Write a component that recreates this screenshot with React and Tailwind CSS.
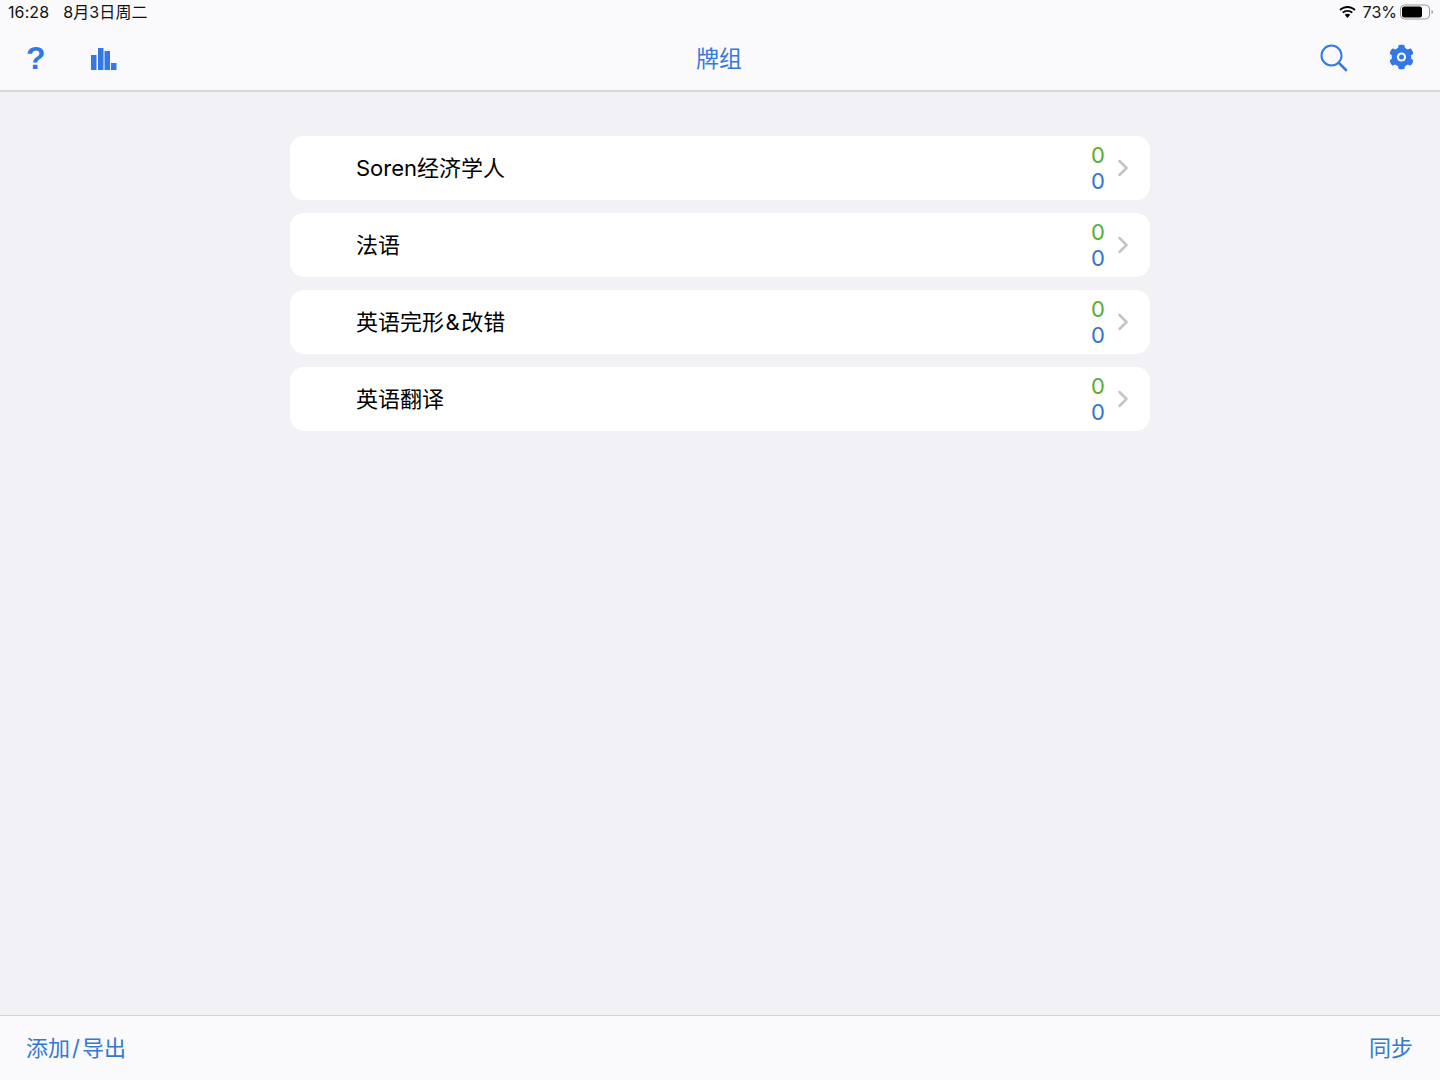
import React from "react";

function Row({ name }) {
  return (
    <div className="flex h-16 items-center rounded-[14px] bg-white pl-[66px] pr-[21px]">
      <span className="flex-1 text-[22px] leading-none text-black">{name}</span>
      <div className="flex w-[14px] translate-x-px flex-col items-center text-[22px] leading-[26.500px]">
        <span className="text-[#57ad33]">0</span>
        <span className="text-[#2f74d0]">0</span>
      </div>
      <svg className="ml-[13px]" width="12" height="18" viewBox="0 0 12 18" fill="none">
        <path d="M2.500 2l7 7-7 7" stroke="#c4c4c7" strokeWidth="2.500" strokeLinecap="round" strokeLinejoin="round" />
      </svg>
    </div>
  );
}

export default function App() {
  return (
    <div className="flex h-[1080px] w-[1440px] flex-col overflow-hidden bg-[#f1f1f6] font-['Inter','Noto_Sans_CJK_SC',sans-serif]">
      <header className="h-[92px] border-b-2 border-[#d8d8da] bg-[#fafafd]">
        <div className="flex h-[24px] items-center justify-between pl-2 pr-[6px] text-[16px] leading-none text-[#111]">
          <div className="flex gap-[14px] tracking-[0.1px]">
            <span>16:28</span>
            <span>8月3日周二</span>
          </div>
          <div className="flex items-center gap-[4px]">
            <svg width="19" height="14" viewBox="0 0 18 13" fill="black">
              <path d="M9 2.600c2.500 0 4.800 1 6.500 2.600l1.200-1.300C14.700 2 12 .8 9 .8S3.300 2 1.300 3.900l1.200 1.300C4.200 3.600 6.500 2.600 9 2.600z" />
              <path d="M9 6.300c1.500 0 2.900.6 3.900 1.500l1.200-1.300C12.700 5.300 11 4.500 9 4.500S5.300 5.300 3.900 6.500l1.200 1.300c1-.9 2.400-1.500 3.900-1.500z" />
              <path d="M9 8.200c-1 0-1.900.4-2.600 1L9 12.200l2.600-3c-.7-.6-1.600-1-2.600-1z" />
            </svg>
            <span className="translate-x-[2px]">73%</span>
            <svg width="35" height="16" viewBox="0 0 35 16" fill="none" className="translate-x-[1px]">
              <rect x="0.500" y="1" width="29" height="14" rx="4" stroke="#9a9a9c" />
              <rect x="2" y="2.500" width="20" height="11" rx="2.500" fill="black" />
              <path d="M31.500 6v4c.9-.3 1.500-1.100 1.500-2s-.6-1.700-1.500-2z" fill="#9a9a9c" />
            </svg>
          </div>
        </div>
        <div className="flex h-[66px] items-center justify-between pl-[26px] pr-[26px]">
          <div className="flex w-[94px] items-center gap-[48px]">
            <span className="w-[17px] translate-y-[1px] text-center font-['Liberation_Sans',sans-serif] text-[32px] font-bold leading-none text-[#3478e6]">?</span>
            <svg width="26" height="22" viewBox="0 0 26 22" fill="#3478e6" className="shrink-0 translate-y-[2px]">
              <rect x="0" y="7" width="5.500" height="15" />
              <rect x="7" y="0" width="5.500" height="22" />
              <rect x="13.500" y="3" width="5.500" height="19" />
              <rect x="20" y="15" width="5.500" height="7" />
            </svg>
          </div>
          <span className="-translate-x-px translate-y-[2px] text-[23px] leading-none text-[#3478d8]">牌组</span>
          <div className="flex w-[94px] items-center justify-end gap-[41px]">
            <svg width="28" height="28" viewBox="0 0 28 28" fill="none" stroke="#3478e6" className="shrink-0 translate-y-[1px]">
              <circle cx="11.500" cy="11.500" r="10" strokeWidth="2" />
              <path d="M18.800 18.800L26 26" strokeWidth="2.600" strokeLinecap="round" />
            </svg>
            <svg width="25" height="25" viewBox="0 0 25 25" className="shrink-0 -translate-y-[0.5px]">
              <g fill="#3478e6">
                <circle cx="12.500" cy="12.500" r="9.800" />
                <rect x="9.200" y="0" width="6.600" height="25" rx="2.200" />
                <rect x="9.200" y="0" width="6.600" height="25" rx="2.200" transform="rotate(60 12.500 12.500)" />
                <rect x="9.200" y="0" width="6.600" height="25" rx="2.200" transform="rotate(120 12.500 12.500)" />
              </g>
              <circle cx="12.500" cy="12.500" r="4.600" fill="#fafafd" />
              <circle cx="12.500" cy="12.500" r="2.500" fill="#3478e6" />
            </svg>
          </div>
        </div>
      </header>

      <main className="flex flex-1 flex-col gap-[13px] px-[290px] pt-[44px]">
        <Row name="Soren经济学人" />
        <Row name="法语" />
        <Row name={<>英语完形<span className="mx-[1.500px]">&amp;</span>改错</>} />
        <Row name="英语翻译" />
      </main>

      <footer className="flex h-[65px] items-center justify-between border-t border-[#d4d4d6] bg-[#fafafd] pl-[26px] pr-[27px] text-[22px] leading-none text-[#3478d0]">
        <span>添加<span className="mx-[2px]">/</span>导出</span>
        <span>同步</span>
      </footer>
    </div>
  );
}
